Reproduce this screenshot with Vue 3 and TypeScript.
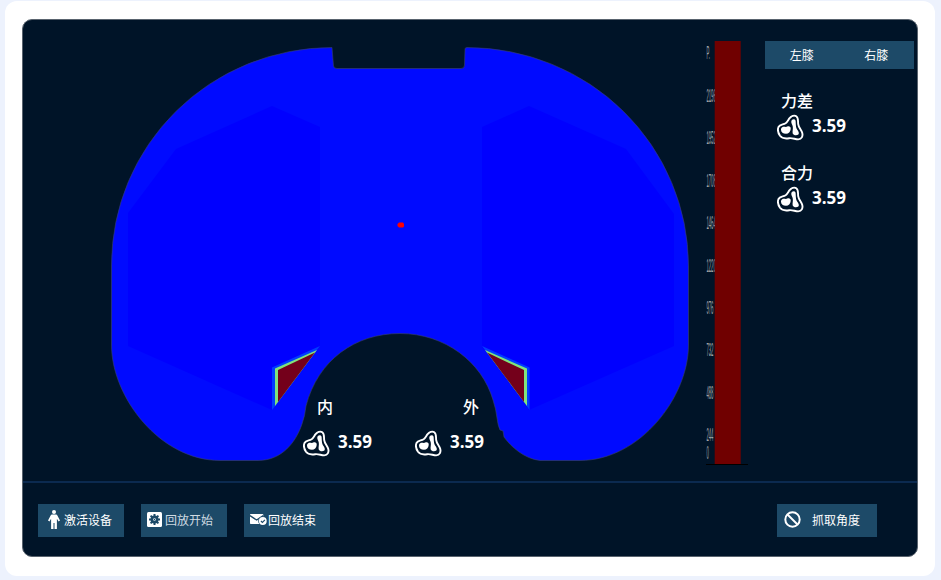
<script setup lang="ts">
import { h, type FunctionalComponent } from 'vue'

interface Tick { label: string; y: number }
interface Metric { title: string; value: string }

// Contour of the tibial plate, clockwise from the upper left lobe.
const plate = [
  'M332 47.5L333.5 66Q334 68.5 337 68.5H461Q464.5 68.5 464.5 65L465 49Q465 47.5 467 47.5',
  'A221.5 218.5 0 0 1 688.5 266V345',
  'C688.5 397 640 460.5 580 460.5H540',
  'C525 459 511 447 504 437L503 431L500 430Q498 426 497 418Q496 409 493 400',
  'C482 362 445 333.5 400 333.5',
  'C355 333.5 318 360 306 406Q305 416 302 424',
  'C296 442 282 460.5 258 460.5H220',
  'C160 460.5 111.5 397 111.5 345V265',
  'A220.5 217.5 0 0 1 332 47.5Z',
].join('')

const ticks: Tick[] = [
  { label: 'P.', y: 18 },
  { label: '2196', y: 60.5 },
  { label: '1952', y: 103 },
  { label: '1708', y: 145.5 },
  { label: '1464', y: 188 },
  { label: '1220', y: 230.5 },
  { label: '976', y: 273 },
  { label: '732', y: 315 },
  { label: '488', y: 357.5 },
  { label: '244', y: 399.5 },
  { label: '0', y: 417.5 },
]

const sides: string[] = ['左膝', '右膝']
const metrics: Metric[] = [
  { title: '力差', value: '3.59' },
  { title: '合力', value: '3.59' },
]
const zones = [
  { key: 'inner', title: '内', value: '3.59' },
  { key: 'outer', title: '外', value: '3.59' },
]

const ForceIcon: FunctionalComponent = () =>
  h('svg', { width: 27, height: 27, viewBox: '0 0 27 27' }, [
    h('path', {
      d: 'M12.6 4.2C14.2 2.3 17.2 .8 19.3 2.2C21.6 3.8 20.8 7.2 21.2 10.2C21.6 13.6 24.2 15.6 25.2 18.8C26.2 22.4 24.6 25.2 21.2 25.4C18 25.3 15.5 23.8 12.2 24.2C8.5 24.8 5 24.6 3 21.8C1.3 19.2 .3 15.8 1.5 13C2.9 10 6 10.8 8.6 9.2C10.4 8 11.2 5.8 12.6 4.2Z',
      fill: 'none', stroke: '#fff', 'stroke-width': 1.9,
    }),
    h('path', {
      d: 'M14.3 7.2C14.6 4.8 18.2 4.4 18.6 6.8C18.9 9.5 18.5 12.3 19.8 15C21.3 17.3 22.6 19 21.4 20.4C19.7 21.7 16.6 21.4 15.7 19.4C15.2 17.3 16.2 15.4 15.8 12.8C15.5 10.6 14 9.4 14.3 7.2Z',
      fill: '#fff',
    }),
    h('path', {
      d: 'M5.6 12.9C7.2 12.2 8.6 13.4 10.2 12.6C12.2 11.7 14 12.8 13.7 15C13.4 17.8 11.6 19.8 9 19.8C6.2 19.8 4 18.2 4 15.7C4 14.4 4.6 13.3 5.6 12.9Z',
      fill: '#fff',
    }),
  ])
</script>

<template>
  <main class="page">
    <section class="card">
      <div class="panel">
        <div class="workspace">
          <div class="map">
            <svg class="plate" width="579" height="415" viewBox="110 47 579 415">
              <path class="outline" :d="plate" />
              <path class="region" d="M272 106L320 127V347L272 410L128 346V213L176 149Z" />
              <path class="region" d="M529 106L626 149L674 214V346L529 410L482 347V127Z" />
              <g>
                <path class="halo" d="M320 346L272 367.5V410L276 405Z" />
                <path class="rim" d="M317 350L275 368.5V406L278 402L314 354Z" />
                <path class="peak" d="M315 352.5L278 370V402Z" />
              </g>
              <g>
                <path class="halo" d="M482 346L529.5 367.5V410L526 405Z" />
                <path class="rim" d="M485 350L527 368.5V406L524 402L488 354Z" />
                <path class="peak" d="M487 352.5L524 370V402Z" />
              </g>
              <path class="centre" d="M399 222.5H403L404 224V226.5L403 227.5H399L397.5 226V224Z" />
            </svg>
            <div v-for="z in zones" :key="z.key" class="zone" :class="z.key">
              <span class="title">{{ z.title }}</span>
              <div class="reading"><ForceIcon /><b>{{ z.value }}</b></div>
            </div>
          </div>

          <svg class="scale" width="43" height="425" viewBox="0 0 43 425">
            <text v-for="t in ticks" :key="t.label" :transform="`translate(.4 ${t.y}) scale(.235 1)`">{{ t.label }}</text>
            <rect x="8.7" y="0" width="26" height="423" class="fill" />
            <path d="M0 423.5H42" class="base" />
          </svg>

          <aside class="side">
            <nav class="tabs">
              <button v-for="s in sides" :key="s">{{ s }}</button>
            </nav>
            <div v-for="m in metrics" :key="m.title" class="metric">
              <span class="title">{{ m.title }}</span>
              <div class="reading"><ForceIcon /><b>{{ m.value }}</b></div>
            </div>
          </aside>
        </div>

        <footer class="actions">
          <button class="btn person">
            <svg width="12" height="20" viewBox="0 0 12 20" fill="#fff">
              <circle cx="6" cy="2" r="2" />
              <path d="M4 4.5H8Q9 4.6 9.5 5.8L12 10.5L10.6 11.4L8.9 8.8V19H6.5V13H5.5V19H3.1V8.8L1.4 11.4L0 10.5L2.5 5.8Q3 4.6 4 4.5Z" />
            </svg>
            <span>激活设备</span>
          </button>
          <button class="btn replay">
            <svg width="15" height="15" viewBox="0 0 15 15">
              <rect width="15" height="15" rx="1.5" fill="#fff" />
              <circle cx="7.5" cy="7.5" r="4" fill="#1d4a68" />
              <path d="M7.5 2V13M2 7.5H13M3.6 3.6L11.4 11.4M11.4 3.6L3.6 11.4" stroke="#1d4a68" stroke-width="2" />
              <circle cx="7.5" cy="7.5" r="1.3" fill="#fff" />
              <circle cx="7.5" cy="7.5" r=".7" fill="#1d4a68" />
            </svg>
            <span>回放开始</span>
          </button>
          <button class="btn finish">
            <svg width="17" height="12" viewBox="0 0 17 12">
              <path d="M.7 0H12.5Q13.3 0 13.3 .8V10H.7Q0 10 0 9.2V.8Q0 0 .7 0Z" fill="#fff" />
              <path d="M0 1.6L6.6 6L13.3 1.6" fill="none" stroke="#1d4a68" stroke-width="1.3" />
              <circle cx="12.8" cy="7" r="4.6" fill="#1d4a68" />
              <circle cx="12.8" cy="7" r="3.9" fill="#fff" />
              <path d="M10.9 7L12.4 8.4L14.9 5.8" fill="none" stroke="#1d4a68" stroke-width="1.1" />
            </svg>
            <span>回放结束</span>
          </button>
          <button class="btn capture">
            <svg width="17" height="17" viewBox="0 0 17 17" fill="none" stroke="#fff" stroke-width="2">
              <circle cx="8.5" cy="8.5" r="7.2" />
              <path d="M3.5 3.5L13.5 13.5" />
            </svg>
            <span>抓取角度</span>
          </button>
        </footer>
      </div>
    </section>
  </main>
</template>

<style>
body {
  margin: 0;
}
</style>

<style scoped>
.page {
  box-sizing: border-box;
  width: 941px;
  height: 580px;
  padding: 1px 6px 4px 5px;
  background: #edf2fd;
  font-family: "Open Sans", "Noto Sans CJK SC", sans-serif;
  color: #fff;
}
.card {
  box-sizing: border-box;
  height: 575px;
  padding: 18px 16px 19px 17px;
  border-radius: 12px;
  background: #fff;
}
.panel {
  box-sizing: border-box;
  width: 896px;
  height: 538px;
  border: 1px solid #59636e;
  border-radius: 10px;
  background: #001428;
  overflow: hidden;
}
.workspace {
  box-sizing: border-box;
  display: flex;
  height: 463px;
  padding: 21px 3px 0 87px;
  border-bottom: 2px solid #0b2a50;
}
.map {
  position: relative;
  width: 579px;
  height: 415px;
  margin-top: 6px;
}
.plate {
  display: block;
}
.outline {
  fill: #000aff;
  stroke: #39436a;
  stroke-width: 0.6;
}
.region {
  fill: #0000ff;
}
.halo {
  fill: #003cff;
}
.rim {
  fill: #80e47c;
}
.peak {
  fill: #74001b;
}
.centre {
  fill: #ff0000;
}
.scale {
  flex: none;
  margin-left: 17px;
}
.scale text {
  font: 18px "Liberation Sans", sans-serif;
  fill: #a0a3a6;
}
.fill {
  fill: #700000;
}
.base {
  stroke: #000;
}
.side {
  flex: none;
  width: 149px;
  margin-left: 16px;
}
.tabs {
  display: grid;
  grid-template-columns: 1fr 1fr;
  height: 28px;
  margin-bottom: 19px;
  background: #1d4a68;
}
button {
  border: 0;
  padding: 0;
  background: #1d4a68;
  color: #fff;
  font: 12px/18px "Noto Sans CJK SC", sans-serif;
}
.tabs button {
  padding: 0 1px 1px 0;
}
.title {
  display: block;
  font: 500 16px/24px "Noto Sans CJK SC", sans-serif;
}
.metric {
  height: 72px;
  padding-left: 12px;
}
.metric .title {
  padding-left: 4px;
}
.reading {
  display: flex;
  gap: 7px;
  height: 28px;
}
.reading svg {
  flex: none;
  margin-top: 1px;
}
.metric .reading svg {
  margin-top: 2px;
}
.reading b {
  font: 700 17px/27px "Open Sans", sans-serif;
}
.metric .reading b {
  padding-left: 1px;
}
.zone {
  position: absolute;
  top: 347px;
  width: 80px;
}
.zone .reading {
  margin-top: 11px;
}
.zone .reading b {
  padding-left: 1px;
  line-height: 25px;
}
.inner {
  left: 193px;
}
.outer {
  left: 305px;
}
.inner .title {
  padding-left: 14px;
}
.outer .title {
  padding-left: 48px;
}
.actions {
  display: flex;
  gap: 17px;
  padding: 21px 40px 0 15px;
}
.btn {
  display: flex;
  align-items: center;
  box-sizing: border-box;
  width: 86px;
  height: 33px;
}
.btn svg {
  flex: none;
  margin-bottom: 1px;
}
.btn span {
  margin-bottom: 1px;
}
.person {
  padding-left: 10px;
  gap: 4px;
}
.replay {
  padding-left: 6px;
  gap: 3px;
}
.replay span {
  color: #cfdae2;
}
.btn.replay svg {
  margin-bottom: 3px;
}
.finish {
  padding-left: 6px;
  gap: 1px;
}
.capture {
  width: 100px;
  margin-left: auto;
  padding-left: 7px;
  gap: 11px;
}
.btn.capture svg {
  margin-bottom: 2px;
}
</style>
